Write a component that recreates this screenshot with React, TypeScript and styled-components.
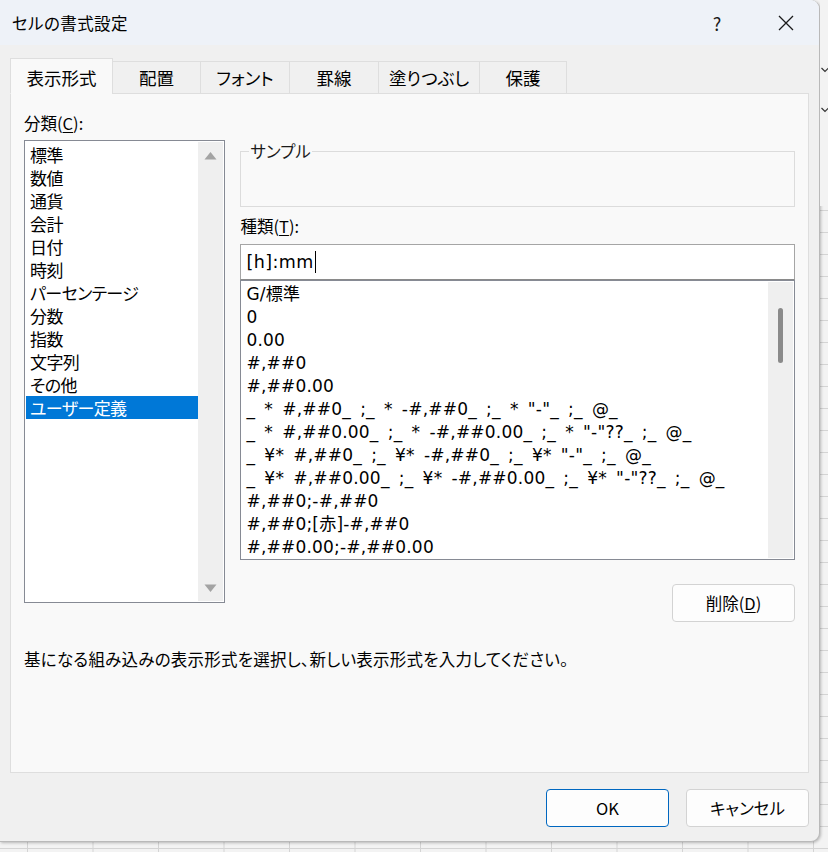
import React from "react";
import styled, { createGlobalStyle } from "styled-components";

const Global = createGlobalStyle`
  html, body { margin: 0; padding: 0; }
  body {
    width: 828px; height: 852px; overflow: hidden;
    font-family: "Noto Sans CJK JP", "Noto Sans", sans-serif;
    font-feature-settings: "palt" 1;
    color: #000;
  }
`;

const Backdrop = styled.div`
  width: 828px;
  height: 852px;
  display: flex;
  align-items: flex-start;
  background-color: #f3f3f3;
  background-image:
    linear-gradient(to right, #d4d4d4 1px, transparent 1px),
    linear-gradient(to bottom, #d4d4d4 1px, transparent 1px);
  background-size: 65.5px 100%, 100% 22px;
  background-position: 27px 0, 0 12px;
`;

const Window = styled.div`
  width: 819px;
  height: 841px;
  flex: none;
  display: flex;
  flex-direction: column;
  background: #f0f0f0;
  border-right: 1px solid #b9b9b9;
  border-bottom: 1px solid #b9b9b9;
  border-radius: 0 9px 9px 0;
  box-shadow: 1px 1px 3px rgba(0,0,0,0.25);
  overflow: hidden;
`;

const RightStrip = styled.div`
  flex: 1;
  height: 140px;
  background: #f3f3f3;
  display: flex;
  flex-direction: column;
  align-items: flex-end;
  padding-top: 66px;
  gap: 32px;
`;

const Chevron = styled.svg`
  width: 7px;
  height: 8px;
  display: block;
`;

const TitleBar = styled.div`
  height: 45px;
  flex: none;
  display: flex;
  align-items: center;
  background: #eef2f8;
  padding-left: 12px;
`;

const Title = styled.div`
  flex: 1;
  font-size: 16.5px;
  letter-spacing: 0.4px;
`;

const TitleButton = styled.div<{ $w: number }>`
  width: ${(p) => p.$w}px;
  height: 45px;
  display: flex;
  align-items: center;
  justify-content: center;
  font-size: 18px;
  color: #1a1a1a;
`;

const Body = styled.div`
  flex: 1;
  display: flex;
  flex-direction: column;
  padding: 13px 10px 0 10px;
`;

const TabRow = styled.div`
  display: flex;
  align-items: flex-end;
  height: 36px;
  margin-bottom: -1px;
  position: relative;
  z-index: 1;
`;

const Tab = styled.div<{ $w: number; $active?: boolean }>`
  width: ${(p) => p.$w}px;
  height: ${(p) => (p.$active ? 36 : 33)}px;
  box-sizing: border-box;
  display: flex;
  align-items: center;
  justify-content: center;
  font-size: 17.5px;
  background: ${(p) => (p.$active ? "#f9f9f9" : "#f0f0f0")};
  border: 1px solid #dedede;
  border-bottom: ${(p) => (p.$active ? "1px solid #f9f9f9" : "1px solid #dedede")};
  margin-left: ${(p) => (p.$active ? 0 : -1)}px;
  padding-top: ${(p) => (p.$active ? 2 : 0)}px;
`;

const Panel = styled.div`
  height: 680px;
  box-sizing: border-box;
  background: #f9f9f9;
  border: 1px solid #dedede;
  padding: 18px 13px 0 13px;
  display: flex;
  flex-direction: column;
`;

const Columns = styled.div`
  display: flex;
  gap: 15px;
`;

const LeftCol = styled.div`
  width: 202px;
  display: flex;
  flex-direction: column;
`;

const RightCol = styled.div`
  width: 556px;
  display: flex;
  flex-direction: column;
`;

const Label = styled.div<{ $mt?: number }>`
  font-size: 16.5px;
  height: 23px;
  line-height: 23px;
  margin-top: ${(p) => p.$mt ?? 0}px;
  u { text-decoration: underline; text-underline-offset: 2px; }
`;

const ListBox = styled.div<{ $h: number; $mt?: number }>`
  height: ${(p) => p.$h}px;
  margin-top: ${(p) => p.$mt ?? 0}px;
  box-sizing: border-box;
  border: 1px solid #868a94;
  background: #fff;
  display: flex;
  padding: 1px;
`;

const Items = styled.div<{ $pt: number }>`
  flex: 1;
  padding-top: ${(p) => p.$pt}px;
  overflow: hidden;
`;

const Item = styled.div<{ $sel?: boolean; $mono?: boolean }>`
  height: 23px;
  line-height: 23px;
  font-size: 17px;
  padding-left: 4px;
  white-space: pre;
  font-family: ${(p) =>
    p.$mono
      ? '"DejaVu Sans", "Noto Sans CJK JP", sans-serif'
      : '"Noto Sans CJK JP", sans-serif'};
  letter-spacing: ${(p) => (p.$mono ? "0.2px" : "-0.6px")};
  word-spacing: ${(p) => (p.$mono ? "3.6px" : "0")};
  background: ${(p) => (p.$sel ? "#0078d7" : "transparent")};
  color: ${(p) => (p.$sel ? "#fff" : "#000")};
`;

const ScrollTrack = styled.div<{ $pad?: string }>`
  width: 25px;
  background: #efefef;
  display: flex;
  flex-direction: column;
  align-items: center;
  justify-content: space-between;
  padding: ${(p) => p.$pad ?? "0"};
  position: relative;
`;

const Arrow = styled.svg`
  width: 13px;
  height: 9px;
  display: block;
`;

const Thumb = styled.div`
  position: absolute;
  left: 10px;
  top: 26px;
  width: 5px;
  height: 55px;
  border-radius: 3px;
  background: #8a8a8a;
`;

const SampleBox = styled.fieldset`
  margin: 29px 0 0 0;
  padding: 0;
  border: 1px solid #dcdcdc;
  min-inline-size: 0;
`;

const SampleLegend = styled.legend`
  margin-left: 8px;
  padding: 0 1px;
  font-size: 16.5px;
  line-height: 20px;
  color: #1a1a1a;
`;

const SampleContent = styled.div`
  height: 45px;
`;

const Input = styled.div`
  margin-top: 6px;
  height: 36px;
  box-sizing: border-box;
  border: 1px solid #a5a5a5;
  border-bottom: 1px solid #8a8a8a;
  background: #fff;
  display: flex;
  align-items: center;
  padding-left: 5px;
  font-size: 17.5px;
  letter-spacing: 0.4px;
  font-family: "DejaVu Sans", sans-serif;
`;

const Caret = styled.span`
  display: inline-block;
  width: 1px;
  height: 22px;
  background: #000;
  margin-left: 1px;
`;

const ButtonRow = styled.div<{ $mt: number }>`
  display: flex;
  justify-content: flex-end;
  gap: 17px;
  margin-top: ${(p) => p.$mt}px;
`;

const Button = styled.div<{ $primary?: boolean }>`
  width: 123px;
  height: 38px;
  box-sizing: border-box;
  border-radius: 4px;
  border: 1px solid ${(p) => (p.$primary ? "#0067c0" : "#d3d3d3")};
  background: #fdfdfd;
  display: flex;
  align-items: center;
  justify-content: center;
  font-size: 16.5px;
  u { text-decoration: underline; text-underline-offset: 2px; }
`;

const Description = styled.div`
  margin-top: 25px;
  font-size: 16.5px;
  letter-spacing: 0.25px;
  height: 24px;
  line-height: 24px;
`;

const Footer = styled.div`
  display: flex;
  justify-content: flex-end;
  gap: 17px;
  padding: 16px 0 0 0;
`;

const categories = [
  "標準", "数値", "通貨", "会計", "日付", "時刻", "パーセンテージ",
  "分数", "指数", "文字列", "その他", "ユーザー定義",
];

const formats = [
  "G/標準",
  "0",
  "0.00",
  "#,##0",
  "#,##0.00",
  '_ * #,##0_ ;_ * -#,##0_ ;_ * "-"_ ;_ @_',
  '_ * #,##0.00_ ;_ * -#,##0.00_ ;_ * "-"??_ ;_ @_',
  '_ ¥* #,##0_ ;_ ¥* -#,##0_ ;_ ¥* "-"_ ;_ @_',
  '_ ¥* #,##0.00_ ;_ ¥* -#,##0.00_ ;_ ¥* "-"??_ ;_ @_',
  "#,##0;-#,##0",
  "#,##0;[赤]-#,##0",
  "#,##0.00;-#,##0.00",
];

const tabs: [string, number][] = [
  ["表示形式", 103],
  ["配置", 89],
  ["フォント", 90],
  ["罫線", 90],
  ["塗りつぶし", 102],
  ["保護", 88],
];

function UpArrow() {
  return (
    <Arrow viewBox="0 0 13 9">
      <path d="M6.5 1 L12.5 8.5 L0.5 8.5 Z" fill="#a3a3a3" />
    </Arrow>
  );
}

function DownArrow() {
  return (
    <Arrow viewBox="0 0 13 9">
      <path d="M0.5 0.5 L12.5 0.5 L6.5 8 Z" fill="#a3a3a3" />
    </Arrow>
  );
}

function Down() {
  return (
    <Chevron viewBox="0 0 7 8">
      <path d="M0.5 2 L4 5.5 L7.5 2" stroke="#333" strokeWidth="1.2" fill="none" />
    </Chevron>
  );
}

export default function App() {
  return (
    <>
      <Global />
      <Backdrop>
        <Window>
          <TitleBar>
            <Title>セルの書式設定</Title>
            <TitleButton $w={72}>?</TitleButton>
            <TitleButton $w={66}>
              <svg width="16" height="16" viewBox="0 0 16 16">
                <path d="M1 1 L15 15 M15 1 L1 15" stroke="#1a1a1a" strokeWidth="1.3" />
              </svg>
            </TitleButton>
          </TitleBar>
          <Body>
            <TabRow>
              {tabs.map(([t, w], i) => (
                <Tab key={t} $w={w} $active={i === 0}>
                  {t}
                </Tab>
              ))}
            </TabRow>
            <Panel>
              <Columns>
                <LeftCol>
                  <Label>
                    分類(<u>C</u>):
                  </Label>
                  <ListBox $h={463} $mt={5}>
                    <Items $pt={1}>
                      {categories.map((c, i) => (
                        <Item key={c} $sel={i === categories.length - 1}>
                          {c}
                        </Item>
                      ))}
                    </Items>
                    <ScrollTrack $pad="9px 0 8px">
                      <UpArrow />
                      <DownArrow />
                    </ScrollTrack>
                  </ListBox>
                </LeftCol>
                <RightCol>
                  <SampleBox>
                    <SampleLegend>サンプル</SampleLegend>
                    <SampleContent />
                  </SampleBox>
                  <Label $mt={8}>
                    種類(<u>T</u>):
                  </Label>
                  <Input>
                    [h]:mm<Caret />
                  </Input>
                  <ListBox $h={280}>
                    <Items $pt={1}>
                      {formats.map((f) => (
                        <Item key={f} $mono>
                          {f}
                        </Item>
                      ))}
                    </Items>
                    <ScrollTrack>
                      <Thumb />
                    </ScrollTrack>
                  </ListBox>
                  <ButtonRow $mt={24}>
                    <Button>
                      削除(<u>D</u>)
                    </Button>
                  </ButtonRow>
                </RightCol>
              </Columns>
              <Description>
                基になる組み込みの表示形式を選択し、新しい表示形式を入力してください。
              </Description>
            </Panel>
            <Footer>
              <Button $primary>OK</Button>
              <Button>キャンセル</Button>
            </Footer>
          </Body>
        </Window>
        <RightStrip>
          <Down />
          <Down />
        </RightStrip>
      </Backdrop>
    </>
  );
}
